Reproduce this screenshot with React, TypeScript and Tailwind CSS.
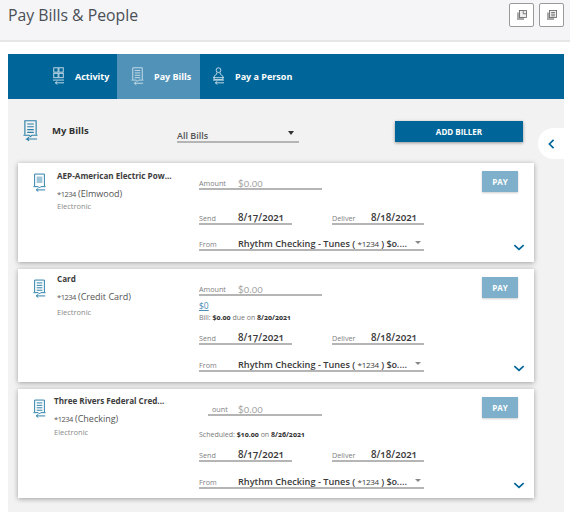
import React from "react";

function BillIcon({ className = "", kind = "bill" }: { className?: string; kind?: "bill" | "filled" | "grid" | "person" }) {
  return (
    <svg viewBox="0 0 16 24" className={className} fill="none" stroke="currentColor" strokeWidth="1.2">
      {kind === "grid" ? (
        <>
          <rect x="2" y="1" width="5.5" height="5.5" /><rect x="8.5" y="1" width="5.5" height="5.5" />
          <rect x="2" y="8" width="5.5" height="5.5" /><rect x="8.5" y="8" width="5.5" height="5.5" />
          <path d="M1 16.5h14M15 20H4l2.5-2M4 20l2.5 2" />
        </>
      ) : kind === "person" ? (
        <>
          <circle cx="8" cy="4" r="3" />
          <path d="M5.8 7v2L2.5 11.5V16h11v-4.5L10.2 9V7" />
          <path d="M1 13.5h14M1 16.5h14M15 20H4l2.5-2M4 20l2.5 2" />
        </>
      ) : (
        <>
          <path d="M2 16V1h12v15" />
          {kind === "filled" ? (
            <rect x="4.5" y="4" width="7" height="8" fill="currentColor" fillOpacity="0.45" stroke="none" />
          ) : (
            <path d="M4.5 4.5h7M4.5 7.5h7M4.5 10.5h7M4.5 13.5h7" />
          )}
          <path d="M.5 16.5h6l1.5 1.6 1.5-1.6h6M15 20.5H4l2.5-2M4 20.5l2.5 2" />
        </>
      )}
    </svg>
  );
}

function Tab({ label, kind, active, box }: { label: string; kind: "grid" | "bill" | "person"; active?: boolean; box: string }) {
  return (
    <div className={`flex h-full items-center gap-[10px] ${box} ${active ? "bg-[#5193b8]" : ""}`}>
      <BillIcon kind={kind} className="h-[19px] w-[13px] shrink-0 text-[#c9dde8]" />
      <span className="whitespace-nowrap text-[9px] font-bold text-white">{label}</span>
    </div>
  );
}

function Field({ label, value, width, muted, caret, labelBox = "w-[39px]", date }: { label: string; value: React.ReactNode; width: string; muted?: boolean; caret?: boolean; labelBox?: string; date?: boolean }) {
  return (
    <div className={`relative flex h-[20px] items-end border-b-2 border-[#b5b5b5] ${width}`}>
      <span className={`shrink-0 text-[7.2px] leading-[10px] text-[#808080] ${labelBox}`}>{label}</span>
      <span className={`whitespace-nowrap leading-[10px] ${muted ? "text-[10px] text-[#a3a3a3]" : date ? "text-[9.8px] font-semibold text-[#3a3a3a]" : "text-[9.2px] font-semibold text-[#3a3a3a]"}`}>
        {value}
      </span>
      {caret && <span className="absolute right-[3px] top-[10px] h-0 w-0 border-x-[3px] border-t-[3px] border-x-transparent border-t-[#888]" />}
    </div>
  );
}

type CardProps = {
  name: string; acct: string; sub?: React.ReactNode; subGap?: string; sendGap: string; fromGap: string;
  className: string; namePad: string; textPad: string; typeGap: string; clipped?: boolean; filled?: boolean;
};

function Card({ name, acct, sub, subGap, sendGap, fromGap, className, namePad, textPad, typeGap, clipped, filled }: CardProps) {
  return (
    <div className={`flex w-[516px] bg-white shadow-[0_1px_5px_rgba(0,0,0,0.35)] ${className}`}>
      <div className="flex w-[181px] shrink-0 pl-[15px]">
        <BillIcon kind={filled ? "filled" : "bill"} className="mt-[10px] h-[20px] w-[13px] shrink-0 text-[#2b7fa8]" />
        <div className={`flex flex-col ${namePad} ${textPad}`}>
          <span className="whitespace-nowrap text-[8.1px] font-bold leading-[14px] text-[#3d3d3d]">{name}</span>
          <span className="mt-[4px] flex whitespace-nowrap text-[9px] leading-[14px] text-[#555]">
            <span className="w-[21px] text-[7.5px] tracking-[-0.5px] [font-feature-settings:'lnum']">*1234</span>{acct}
          </span>
          <span className={`text-[7.5px] leading-[10px] text-[#8a8a8a] ${typeGap}`}>Electronic</span>
        </div>
      </div>
      <div className="flex flex-1 flex-col pt-[7px]">
        <div className="flex h-[20px] items-start">
          <div className="w-[283px]">
            {clipped ? (
              <div className="ml-[9px]"><Field label="ount" labelBox="w-[30px] pl-[4px]" value="$0.00" width="w-[114px]" muted /></div>
            ) : (
              <Field label="Amount" value="$0.00" width="w-[123px]" muted />
            )}
          </div>
          <div className="mt-[1px] flex h-[21px] w-[36px] items-center justify-center bg-[#7eb0cb] text-[8px] font-bold text-white shadow-[0_1px_2px_rgba(0,0,0,0.2)]">PAY</div>
        </div>
        {sub && <div className={subGap}>{sub}</div>}
        <div className={`flex ${sendGap}`}>
          <Field label="Send" value="8/17/2021" width="w-[93px]" date />
          <div className="ml-[40px]">
            <Field label="Deliver" value="8/18/2021" width="w-[92px]" date />
          </div>
        </div>
        <div className={`flex items-end ${fromGap}`}>
          <Field label="From" value={<>Rhythm Checking - Tunes ( <span className="text-[8px] font-normal tracking-[-0.3px] [font-feature-settings:'lnum']">*1234</span> ) $0....</>} width="w-[225px]" caret />
          <svg viewBox="0 0 14 9" className="ml-[89px] h-[7px] w-[12px] text-[#006699]" fill="none" stroke="currentColor" strokeWidth="2.2">
            <path d="M1 1.5l6 5.5 6-5.5" />
          </svg>
        </div>
      </div>
    </div>
  );
}

export default function App() {
  return (
    <div className="relative h-[512px] w-[570px] overflow-hidden bg-white font-['Open_Sans','Noto_Sans',sans-serif] [font-feature-settings:'onum']">
      <header className="flex h-[42px] items-start justify-between border-b-2 border-[#e6e6e6] bg-[#f5f5f7] pl-[8px] pr-[6px] pt-[3px]">
        <h1 className="text-[15.8px] leading-[24px] text-[#4a4f55]">Pay Bills &amp; People</h1>
        <div className="flex gap-[5px]">
          {[0, 1].map((i) => (
            <div key={i} className="flex h-[24px] w-[25px] items-center justify-center rounded-[2px] border border-[#9a9a9a] bg-white">
              <svg viewBox="0 0 12 12" className="h-[10px] w-[10px]">
                <rect x="0" y="3" width="8.5" height="9" fill="#aaa" />
                <rect x="3" y="0.5" width="8.5" height="8.5" fill="#eee" stroke="#666" />
                <path d={i === 0 ? "M7.5 1v3.5h3.5" : "M5 3h4.5M5 5h4.5M5 7h4.5"} stroke="#666" fill="none" />
              </svg>
            </div>
          ))}
        </div>
      </header>
      <main className="mx-[8px] mt-[12px] h-[458px] w-[556px] bg-[#f2f2f2]">
        <nav className="flex h-[45px] bg-[#006699] pl-[35px]">
          <Tab label="Activity" kind="grid" box="w-[74px] pl-[9px]" />
          <Tab label="Pay Bills" kind="bill" active box="w-[83px] pl-[14px]" />
          <Tab label="Pay a Person" kind="person" box="w-[105px] pl-[12px]" />
        </nav>
        <div className="flex h-[64px] items-start pl-[15px]">
          <BillIcon kind="bill" className="mt-[20px] h-[24px] w-[15px] shrink-0 text-[#2b7fa8]" />
          <span className="ml-[14px] mt-[24px] w-[38px] whitespace-nowrap text-[9.5px] font-bold leading-[16px] text-[#333]">My Bills</span>
          <div className="relative ml-[87px] mt-[30px] h-[14px] w-[122px] border-b-2 border-[#b5b5b5] text-[9px] font-semibold leading-[14px] text-[#555]">
            All Bills
            <span className="absolute right-[5px] top-[2px] h-0 w-0 border-x-[3px] border-t-[4px] border-x-transparent border-t-[#333]" />
          </div>
          <div className="ml-[96px] mt-[22px] flex h-[21px] w-[128px] items-center justify-center bg-[#006699] text-[8px] font-bold text-white shadow-[0_1px_3px_rgba(0,0,0,0.4)]">ADD BILLER</div>
        </div>
        <div className="flex flex-col gap-[7px] pl-[10px]">
          <Card className="h-[99px]" filled name="AEP-American Electric Pow..." acct="(Elmwood)" namePad="pl-[11px]" textPad="pt-[6px]" typeGap="mt-0" sendGap="mt-[15px]" fromGap="mt-[6px]" />
          <Card
            className="h-[113px]"
            name="Card"
            acct="(Credit Card)"
            namePad="pl-[11px]"
            textPad="pt-[3px]"
            typeGap="mt-[3px]"
            subGap="mt-[3px]"
            sub={
              <div className="flex flex-col">
                <span className="text-[8.5px] leading-[13px] text-[#4a8db5] underline [font-feature-settings:'lnum']">$0</span>
                <span className="text-[7px] leading-[12px] text-[#777]">Bill: <b className="text-[#333]">$0.00</b> due on <b className="text-[#333]">8/20/2021</b></span>
              </div>
            }
            sendGap="mt-[1px]"
            fromGap="mt-[7px]"
          />
          <Card
            className="h-[109px]"
            name="Three Rivers Federal Cred..."
            acct="(Checking)"
            namePad="pl-[8px]"
            textPad="pt-[5px]"
            typeGap="mt-[1px]"
            clipped
            subGap="mt-[13px]"
            sub={<span className="block text-[7px] leading-[12px] text-[#777]">Scheduled: <b className="text-[#333]">$10.00</b> on <b className="text-[#333]">8/26/2021</b></span>}
            sendGap="mt-[1px]"
            fromGap="mt-[7px]"
          />
        </div>
      </main>
      <div className="absolute left-[538px] top-[128px] flex h-[31px] w-[26px] items-center justify-center rounded-l-full bg-white text-[#006699]">
        <svg viewBox="0 0 8 12" className="h-[10px] w-[7px]" fill="none" stroke="currentColor" strokeWidth="2"><path d="M6.5 1L1.5 6l5 5" /></svg>
      </div>
    </div>
  );
}
